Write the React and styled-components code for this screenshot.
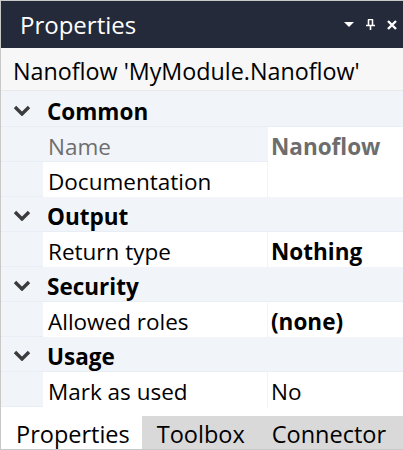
import React from "react";
import styled, { createGlobalStyle } from "styled-components";

const GlobalStyle = createGlobalStyle`
  html, body {
    margin: 0;
    padding: 0;
    background: #ffffff;
  }
  * {
    box-sizing: border-box;
  }
`;

const groups = [
  {
    name: "Common",
    props: [
      { label: "Name", value: "Nanoflow", disabled: true, bold: true },
      { label: "Documentation", value: "" },
    ],
  },
  {
    name: "Output",
    props: [{ label: "Return type", value: "Nothing", bold: true }],
  },
  {
    name: "Security",
    props: [{ label: "Allowed roles", value: "(none)", bold: true }],
  },
  {
    name: "Usage",
    props: [{ label: "Mark as used", value: "No" }],
  },
];

const tabs = ["Properties", "Toolbox", "Connector"];

const Chevron = () => (
  <svg width="18" height="11" viewBox="0 0 18 11">
    <path d="M2 2 L9 9 L16 2" fill="none" stroke="#3c3c3c" strokeWidth="3.4" />
  </svg>
);

const App = () => {
  return (
    <>
      <GlobalStyle />
      <Panel>
        <TitleBar>
          <Title>Properties</Title>
          <TitleIcons>
            <svg width="10" height="6" viewBox="0 0 10 6">
              <path d="M0 0 H10 L5 5 Z" fill="#ffffff" />
            </svg>
            <svg width="9" height="11" viewBox="0 0 9 11">
              <path
                d="M2 0.5 H7 M2.5 0.5 V6 M6.5 0.5 V6 M0 6.5 H9 M4.5 6.5 V11"
                fill="none"
                stroke="#ffffff"
                strokeWidth="1.6"
              />
            </svg>
            <svg width="10" height="10" viewBox="0 0 10 10">
              <path
                d="M1 1 L9 9 M9 1 L1 9"
                fill="none"
                stroke="#ffffff"
                strokeWidth="2.4"
              />
            </svg>
          </TitleIcons>
        </TitleBar>
        <Subtitle>Nanoflow 'MyModule.Nanoflow'</Subtitle>
        <Grid>
          {groups.map((g) => (
            <React.Fragment key={g.name}>
              <GroupRow>
                <ChevronCell>
                  <Chevron />
                </ChevronCell>
                <GroupName>{g.name}</GroupName>
              </GroupRow>
              {g.props.map((p) => (
                <PropRow key={p.label}>
                  <span />
                  <Label $disabled={p.disabled}>{p.label}</Label>
                  <Value $bold={p.bold} $disabled={p.disabled}>
                    {p.value}
                  </Value>
                </PropRow>
              ))}
            </React.Fragment>
          ))}
        </Grid>
        <Filler />
        <Tabs>
          {tabs.map((t, i) => (
            <Tab key={t} $active={i === 0}>
              {t}
            </Tab>
          ))}
        </Tabs>
      </Panel>
    </>
  );
};

const Panel = styled.div`
  width: 403px;
  height: 450px;
  display: flex;
  flex-direction: column;
  border: 1px solid #c8c8c8;
  border-right: none;
  background: #ffffff;
  font-family: "Segoe UI", "Open Sans", "Noto Sans", sans-serif;
  color: #000000;
  overflow: hidden;
`;

const TitleBar = styled.div`
  height: 47px;
  flex-shrink: 0;
  display: flex;
  align-items: center;
  justify-content: space-between;
  padding: 0 6px 0 19px;
  background: #242a3a;
`;

const Title = styled.div`
  color: #ffffff;
  font-size: 24px;
  padding-bottom: 1px;
`;

const TitleIcons = styled.div`
  display: flex;
  align-items: center;
  gap: 12px;
`;

const Subtitle = styled.div`
  height: 43px;
  flex-shrink: 0;
  display: flex;
  align-items: center;
  padding: 3px 0 0 12px;
  font-size: 23.3px;
  white-space: nowrap;
  background: #f7f7f7;
  border-bottom: 1px solid #e8e8e8;
`;

const Grid = styled.div`
  display: flex;
  flex-direction: column;
  background: #f1f5fa;
  padding-top: 1px;
`;

const GroupRow = styled.div`
  height: 35px;
  display: flex;
  align-items: center;
  border-bottom: 1px solid #e9eef6;
`;

const ChevronCell = styled.div`
  width: 41px;
  display: flex;
  justify-content: center;
  padding: 2px 0 0 1px;
`;

const GroupName = styled.div`
  font-size: 22.5px;
  font-weight: 700;
  padding: 4px 0 0 5px;
`;

const PropRow = styled.div`
  height: 35px;
  display: grid;
  grid-template-columns: 41px 224px 1fr;
  column-gap: 1px;
  border-bottom: 1px solid #e9eef6;
`;

const Label = styled.div`
  display: flex;
  align-items: center;
  padding: 4px 0 0 5px;
  font-size: 22.5px;
  white-space: nowrap;
  color: ${(p) => (p.$disabled ? "#6e6e6e" : "#000000")};
  background: ${(p) => (p.$disabled ? "transparent" : "#ffffff")};
`;

const Value = styled.div`
  display: flex;
  align-items: center;
  padding: 4px 0 0 3px;
  font-size: 22.5px;
  white-space: nowrap;
  font-weight: ${(p) => (p.$bold ? 700 : 400)};
  color: ${(p) => (p.$disabled ? "#6d6d6d" : "#000000")};
  background: #ffffff;
`;

const Filler = styled.div`
  flex: 1;
`;

const Tabs = styled.div`
  height: 33px;
  flex-shrink: 0;
  display: flex;
  background: #d9d9d9;
`;

const Tab = styled.div`
  display: flex;
  align-items: center;
  padding: 3px 12px 0 15px;
  font-size: 23.5px;
  white-space: nowrap;
  background: ${(p) => (p.$active ? "#ffffff" : "transparent")};
`;

export default App;
